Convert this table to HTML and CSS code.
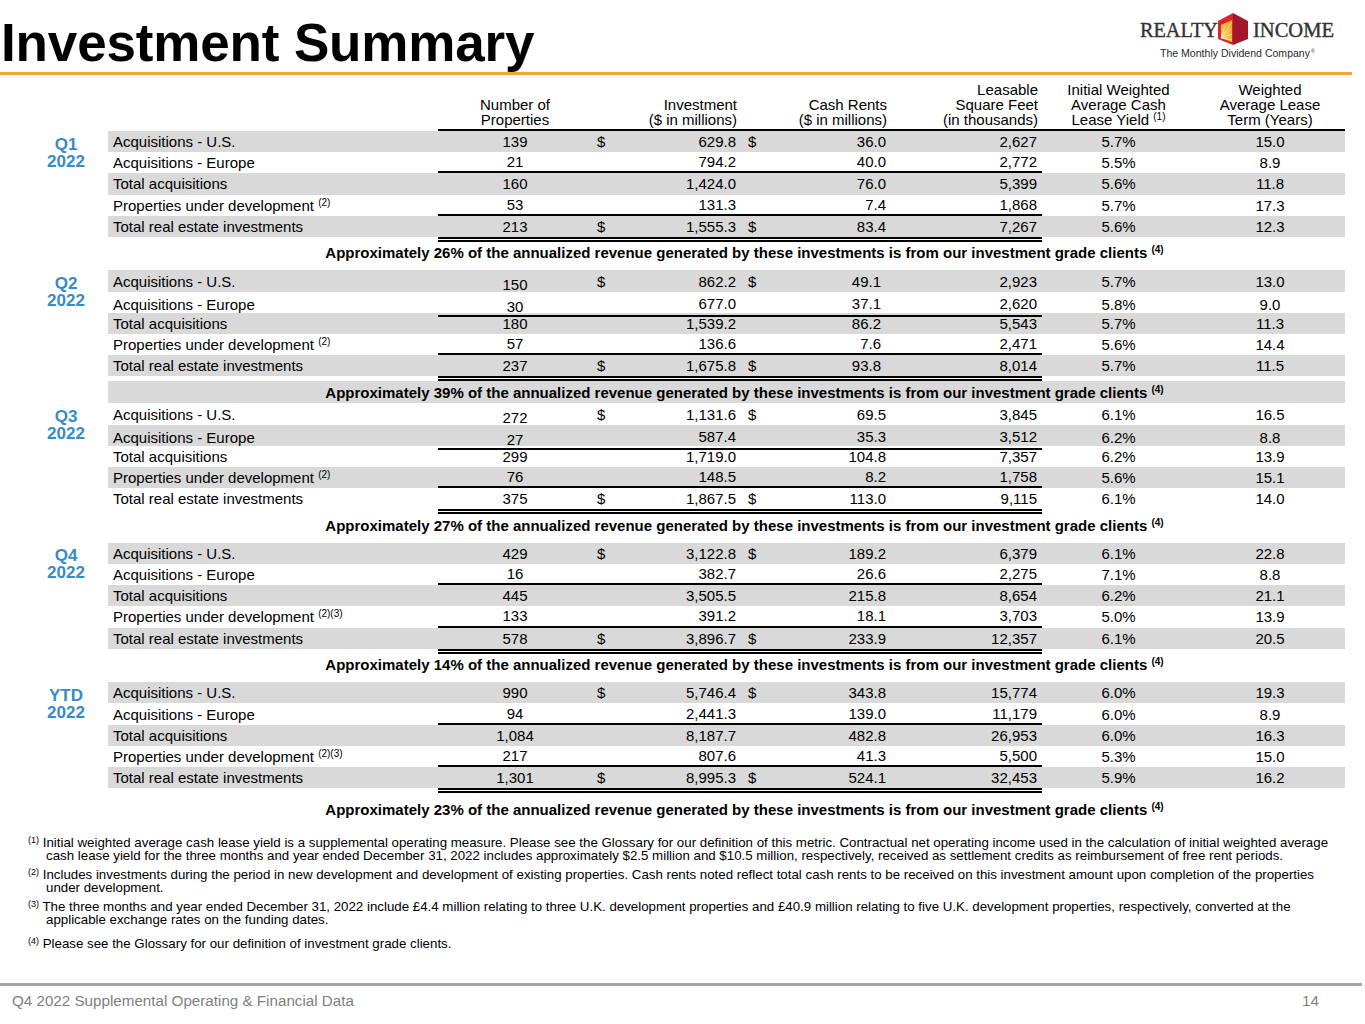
FILE: index.html
```html
<!DOCTYPE html>
<html>
<head>
<meta charset="utf-8">
<title>Investment Summary</title>
<link rel="stylesheet" href="styles.css">
</head>
<body>
<header class="top">
  <h1 class="title">Investment Summary</h1>
  <svg class="logo" width="206" height="52" viewBox="0 0 206 52">
    <defs>
      <linearGradient id="sun" x1="0" y1="1" x2="1" y2="0">
        <stop offset="0" stop-color="#fcd45a"/>
        <stop offset="1" stop-color="#f39a1f"/>
      </linearGradient>
    </defs>
    <text class="lg-word" x="2" y="27" textLength="78" lengthAdjust="spacingAndGlyphs">REALTY</text>
    <polygon class="ic-right" points="95,3 110,11 110,29 95,35"/>
    <polygon class="ic-left" points="95,3 95,35 80,29 80,11"/>
    <polygon points="83,15 94,10 94,32 83,28" fill="url(#sun)"/>
    <path class="ic-ray" d="M83,28 L94,12 M83,28 L94,18 M83,28 L94,24 M83,28 L94,30 M83,28 L88,13"/>
    <text class="lg-word" x="115" y="27" textLength="81" lengthAdjust="spacingAndGlyphs">INCOME</text>
    <text class="lg-tag" x="22" y="47" textLength="150" lengthAdjust="spacingAndGlyphs">The Monthly Dividend Company</text>
    <text class="lg-reg" x="173" y="43">®</text>
  </svg>
</header>

<div class="thead">
  <div class="h"></div>
  <div class="h np u"><div>Number of<br>Properties</div></div>
  <div class="h u"></div>
  <div class="h inv u"><div>Investment<br>($ in millions)</div></div>
  <div class="h u"></div>
  <div class="h cash u"><div>Cash Rents<br>($ in millions)</div></div>
  <div class="h lsf u"><div>Leasable<br>Square Feet<br>(in thousands)</div></div>
  <div class="h y u"><div>Initial Weighted<br>Average Cash<br>Lease Yield <sup class="hs">(1)</sup></div></div>
  <div class="h t u"><div>Weighted<br>Average Lease<br>Term (Years)</div></div>
</div>

<!-- Q1 -->
<section class="block">
  <div class="q">Q1<br>2022</div>
  <div class="rows">
    <div class="row g"><div class="c lbl">Acquisitions - U.S.</div><div class="c np">139</div><div class="c d1">$</div><div class="c inv">629.8</div><div class="c d2">$</div><div class="c cash">36.0</div><div class="c lsf">2,627</div><div class="c y">5.7%</div><div class="c t">15.0</div></div>
    <div class="row ul"><div class="c lbl">Acquisitions - Europe</div><div class="c np">21</div><div class="c d1"></div><div class="c inv">794.2</div><div class="c d2"></div><div class="c cash">40.0</div><div class="c lsf">2,772</div><div class="c y">5.5%</div><div class="c t">8.9</div></div>
    <div class="row g"><div class="c lbl">Total acquisitions</div><div class="c np">160</div><div class="c d1"></div><div class="c inv">1,424.0</div><div class="c d2"></div><div class="c cash">76.0</div><div class="c lsf">5,399</div><div class="c y">5.6%</div><div class="c t">11.8</div></div>
    <div class="row ul"><div class="c lbl"><span>Properties under development <sup class="ts">(2)</sup></span></div><div class="c np">53</div><div class="c d1"></div><div class="c inv">131.3</div><div class="c d2"></div><div class="c cash">7.4</div><div class="c lsf">1,868</div><div class="c y">5.7%</div><div class="c t">17.3</div></div>
    <div class="row g"><div class="c lbl">Total real estate investments</div><div class="c np">213</div><div class="c d1">$</div><div class="c inv">1,555.3</div><div class="c d2">$</div><div class="c cash">83.4</div><div class="c lsf">7,267</div><div class="c y">5.6%</div><div class="c t">12.3</div></div>
    <div class="dbl"></div>
  </div>
</section>
<div class="note">Approximately 26% of the annualized revenue generated by these investments is from our investment grade clients <sup class="ns">(4)</sup></div>

<!-- Q2 -->
<section class="block">
  <div class="q">Q2<br>2022</div>
  <div class="rows q2">
    <div class="row g"><div class="c lbl">Acquisitions - U.S.</div><div class="c np lo">150</div><div class="c d1">$</div><div class="c inv">862.2</div><div class="c d2">$</div><div class="c cash">49.1</div><div class="c lsf">2,923</div><div class="c y">5.7%</div><div class="c t">13.0</div></div>
    <div class="row ul"><div class="c lbl">Acquisitions - Europe</div><div class="c np lo">30</div><div class="c d1"></div><div class="c inv">677.0</div><div class="c d2"></div><div class="c cash">37.1</div><div class="c lsf">2,620</div><div class="c y">5.8%</div><div class="c t">9.0</div></div>
    <div class="row g"><div class="c lbl">Total acquisitions</div><div class="c np">180</div><div class="c d1"></div><div class="c inv">1,539.2</div><div class="c d2"></div><div class="c cash">86.2</div><div class="c lsf">5,543</div><div class="c y">5.7%</div><div class="c t">11.3</div></div>
    <div class="row ul"><div class="c lbl"><span>Properties under development <sup class="ts">(2)</sup></span></div><div class="c np">57</div><div class="c d1"></div><div class="c inv">136.6</div><div class="c d2"></div><div class="c cash">7.6</div><div class="c lsf">2,471</div><div class="c y">5.6%</div><div class="c t">14.4</div></div>
    <div class="row g"><div class="c lbl">Total real estate investments</div><div class="c np">237</div><div class="c d1">$</div><div class="c inv">1,675.8</div><div class="c d2">$</div><div class="c cash">93.8</div><div class="c lsf">8,014</div><div class="c y">5.7%</div><div class="c t">11.5</div></div>
    <div class="dbl"></div>
  </div>
</section>
<div class="note gray">Approximately 39% of the annualized revenue generated by these investments is from our investment grade clients <sup class="ns">(4)</sup></div>

<!-- Q3 -->
<section class="block">
  <div class="q">Q3<br>2022</div>
  <div class="rows">
    <div class="row"><div class="c lbl">Acquisitions - U.S.</div><div class="c np lo">272</div><div class="c d1">$</div><div class="c inv">1,131.6</div><div class="c d2">$</div><div class="c cash">69.5</div><div class="c lsf">3,845</div><div class="c y">6.1%</div><div class="c t">16.5</div></div>
    <div class="row g ul"><div class="c lbl">Acquisitions - Europe</div><div class="c np lo">27</div><div class="c d1"></div><div class="c inv">587.4</div><div class="c d2"></div><div class="c cash">35.3</div><div class="c lsf">3,512</div><div class="c y">6.2%</div><div class="c t">8.8</div></div>
    <div class="row"><div class="c lbl">Total acquisitions</div><div class="c np">299</div><div class="c d1"></div><div class="c inv">1,719.0</div><div class="c d2"></div><div class="c cash">104.8</div><div class="c lsf">7,357</div><div class="c y">6.2%</div><div class="c t">13.9</div></div>
    <div class="row g ul"><div class="c lbl"><span>Properties under development <sup class="ts">(2)</sup></span></div><div class="c np">76</div><div class="c d1"></div><div class="c inv">148.5</div><div class="c d2"></div><div class="c cash">8.2</div><div class="c lsf">1,758</div><div class="c y">5.6%</div><div class="c t">15.1</div></div>
    <div class="row"><div class="c lbl">Total real estate investments</div><div class="c np">375</div><div class="c d1">$</div><div class="c inv">1,867.5</div><div class="c d2">$</div><div class="c cash">113.0</div><div class="c lsf">9,115</div><div class="c y">6.1%</div><div class="c t">14.0</div></div>
    <div class="dbl"></div>
  </div>
</section>
<div class="note">Approximately 27% of the annualized revenue generated by these investments is from our investment grade clients <sup class="ns">(4)</sup></div>

<!-- Q4 -->
<section class="block">
  <div class="q">Q4<br>2022</div>
  <div class="rows">
    <div class="row g"><div class="c lbl">Acquisitions - U.S.</div><div class="c np">429</div><div class="c d1">$</div><div class="c inv">3,122.8</div><div class="c d2">$</div><div class="c cash">189.2</div><div class="c lsf">6,379</div><div class="c y">6.1%</div><div class="c t">22.8</div></div>
    <div class="row ul"><div class="c lbl">Acquisitions - Europe</div><div class="c np">16</div><div class="c d1"></div><div class="c inv">382.7</div><div class="c d2"></div><div class="c cash">26.6</div><div class="c lsf">2,275</div><div class="c y">7.1%</div><div class="c t">8.8</div></div>
    <div class="row g"><div class="c lbl">Total acquisitions</div><div class="c np">445</div><div class="c d1"></div><div class="c inv">3,505.5</div><div class="c d2"></div><div class="c cash">215.8</div><div class="c lsf">8,654</div><div class="c y">6.2%</div><div class="c t">21.1</div></div>
    <div class="row ul"><div class="c lbl"><span>Properties under development <sup class="ts">(2)(3)</sup></span></div><div class="c np">133</div><div class="c d1"></div><div class="c inv">391.2</div><div class="c d2"></div><div class="c cash">18.1</div><div class="c lsf">3,703</div><div class="c y">5.0%</div><div class="c t">13.9</div></div>
    <div class="row g"><div class="c lbl">Total real estate investments</div><div class="c np">578</div><div class="c d1">$</div><div class="c inv">3,896.7</div><div class="c d2">$</div><div class="c cash">233.9</div><div class="c lsf">12,357</div><div class="c y">6.1%</div><div class="c t">20.5</div></div>
    <div class="dbl"></div>
  </div>
</section>
<div class="note">Approximately 14% of the annualized revenue generated by these investments is from our investment grade clients <sup class="ns">(4)</sup></div>

<!-- YTD -->
<section class="block">
  <div class="q">YTD<br>2022</div>
  <div class="rows">
    <div class="row g"><div class="c lbl">Acquisitions - U.S.</div><div class="c np">990</div><div class="c d1">$</div><div class="c inv">5,746.4</div><div class="c d2">$</div><div class="c cash">343.8</div><div class="c lsf">15,774</div><div class="c y">6.0%</div><div class="c t">19.3</div></div>
    <div class="row ul"><div class="c lbl">Acquisitions - Europe</div><div class="c np">94</div><div class="c d1"></div><div class="c inv">2,441.3</div><div class="c d2"></div><div class="c cash">139.0</div><div class="c lsf">11,179</div><div class="c y">6.0%</div><div class="c t">8.9</div></div>
    <div class="row g"><div class="c lbl">Total acquisitions</div><div class="c np">1,084</div><div class="c d1"></div><div class="c inv">8,187.7</div><div class="c d2"></div><div class="c cash">482.8</div><div class="c lsf">26,953</div><div class="c y">6.0%</div><div class="c t">16.3</div></div>
    <div class="row ul"><div class="c lbl"><span>Properties under development <sup class="ts">(2)(3)</sup></span></div><div class="c np">217</div><div class="c d1"></div><div class="c inv">807.6</div><div class="c d2"></div><div class="c cash">41.3</div><div class="c lsf">5,500</div><div class="c y">5.3%</div><div class="c t">15.0</div></div>
    <div class="row g"><div class="c lbl">Total real estate investments</div><div class="c np">1,301</div><div class="c d1">$</div><div class="c inv">8,995.3</div><div class="c d2">$</div><div class="c cash">524.1</div><div class="c lsf">32,453</div><div class="c y">5.9%</div><div class="c t">16.2</div></div>
    <div class="dbl"></div>
  </div>
</section>
<div class="note last">Approximately 23% of the annualized revenue generated by these investments is from our investment grade clients <sup class="ns">(4)</sup></div>

<div class="fns">
  <p class="fn fn1"><sup class="fs">(1)</sup> Initial weighted average cash lease yield is a supplemental operating measure. Please see the Glossary for our definition of this metric. Contractual net operating income used in the calculation of initial weighted average<br>cash lease yield for the three months and year ended December 31, 2022 includes approximately $2.5 million and $10.5 million, respectively, received as settlement credits as reimbursement of free rent periods.</p>
  <p class="fn fn2"><sup class="fs">(2)</sup> Includes investments during the period in new development and development of existing properties. Cash rents noted reflect total cash rents to be received on this investment amount upon completion of the properties<br>under development.</p>
  <p class="fn fn3"><sup class="fs">(3)</sup> The three months and year ended December 31, 2022 include £4.4 million relating to three U.K. development properties and £40.9 million relating to five U.K. development properties, respectively, converted at the<br>applicable exchange rates on the funding dates.</p>
  <p class="fn fn4"><sup class="fs">(4)</sup> Please see the Glossary for our definition of investment grade clients.</p>
</div>

<footer class="foot">
  <span>Q4 2022 Supplemental Operating &amp; Financial Data</span>
  <span>14</span>
</footer>
</body>
</html>
```

FILE: styles.css
```css
html, body {
  margin: 0;
  padding: 0;
  background: #ffffff;
}
body {
  width: 1365px;
  font-family: "Liberation Sans", Arial, sans-serif;
  color: #000000;
}

/* ---------- header ---------- */
.top {
  display: flex;
  justify-content: space-between;
  align-items: flex-start;
  height: 72px;
  margin-right: 13px;
  border-bottom: 3px solid #f4a43d;
}
.title {
  margin: 0;
  padding: 16px 0 0 1px;
  font-size: 53px;
  line-height: 54px;
  font-weight: bold;
  letter-spacing: -0.15px;
  white-space: nowrap;
}
.logo {
  display: block;
  margin-top: 10px;
  margin-right: 8px;
}
.lg-word {
  font-family: "Liberation Serif", "Times New Roman", serif;
  font-weight: normal;
  font-size: 22px;
  fill: #333333;
  stroke: #333333;
  stroke-width: 0.4px;
}
.lg-tag {
  font-family: "Liberation Sans", Arial, sans-serif;
  font-size: 10px;
  fill: #2a2a2a;
}
.lg-reg {
  font-family: "Liberation Sans", Arial, sans-serif;
  font-size: 5px;
  fill: #2a2a2a;
}
.ic-right { fill: #a3172b; }
.ic-left { fill: #d8262c; }
.ic-ray { stroke: #ffffff; stroke-width: 0.7; fill: none; opacity: 0.8; }

/* ---------- table ---------- */
.thead,
.row {
  display: grid;
  grid-template-columns: 330px 154px 20px 128px 22px 128px 152px 153px 150px;
}
.thead {
  margin-left: 108px;
  width: 1237px;
  height: 56px;
}
.h {
  display: flex;
  flex-direction: column;
  justify-content: flex-end;
  box-sizing: border-box;
  padding-bottom: 2px;
  font-size: 15px;
  line-height: 15px;
}
.h.u { border-bottom: 2px solid #000; }
.h.np, .h.y, .h.t { text-align: center; }
.h.inv, .h.cash { text-align: right; padding-right: 3px; }
.h.lsf { text-align: right; padding-right: 4px; }
.hs {
  font-size: 10px;
  line-height: 0;
  vertical-align: 5px;
}

.block {
  display: grid;
  grid-template-columns: 108px 1237px;
}
.q {
  padding: 4.5px 0 0 24px;
  text-align: center;
  color: #368bc8;
  font-weight: bold;
  font-size: 17px;
  line-height: 17px;
}
.row {
  height: 21.2px;
  font-size: 15px;
}
.row.g { background: #d9d9d9; }
.c {
  display: flex;
  align-items: center;
  box-sizing: border-box;
  white-space: nowrap;
}
.c.lbl { padding-left: 5px; }
.c.np, .c.y, .c.t { justify-content: center; }
.c.d1 { padding-left: 5px; }
.c.d2 { padding-left: 8px; }
.c.inv, .c.cash { justify-content: flex-end; padding-right: 4px; }
.c.lsf { justify-content: flex-end; padding-right: 5px; }
.q2 .c.cash { padding-right: 9px; }
.c.lo { padding-top: 6px; }
.ul .np, .ul .d1, .ul .inv, .ul .d2, .ul .cash, .ul .lsf {
  border-bottom: 2px solid #000;
}
.ts {
  font-size: 10px;
  line-height: 0;
  vertical-align: 5px;
}
.dbl {
  margin-left: 330px;
  width: 604px;
  height: 1px;
  border-top: 2px solid #000;
  border-bottom: 2px solid #000;
}

.note {
  margin-left: 108px;
  width: 1237px;
  box-sizing: border-box;
  height: 28.5px;
  padding: 2.5px 0 0 36px;
  text-align: center;
  font-weight: bold;
  font-size: 15px;
  line-height: 17px;
  white-space: nowrap;
}
.note.gray {
  background: #d9d9d9;
  height: 22px;
}
.note.last {
  height: auto;
  padding-top: 8px;
}
.ns {
  font-size: 10px;
  line-height: 0;
  vertical-align: 5px;
}

/* ---------- footnotes ---------- */
.fns {
  margin-top: 18px;
  padding-left: 28px;
}
.fn {
  margin: 0;
  padding-left: 18px;
  text-indent: -18px;
  font-size: 13.3px;
  line-height: 13px;
  white-space: nowrap;
}
.fn1, .fn2 { margin-bottom: 6px; }
.fn3 { margin-bottom: 11px; }
.fs {
  font-size: 9px;
  line-height: 0;
  vertical-align: 4px;
}

/* ---------- footer ---------- */
.foot {
  margin-top: 33px;
  margin-right: 3px;
  border-top: 3px solid #a6a6a6;
  display: flex;
  justify-content: space-between;
  padding: 6px 43px 0 12px;
  font-size: 15.2px;
  line-height: 17px;
  color: #7f7f7f;
}
```
